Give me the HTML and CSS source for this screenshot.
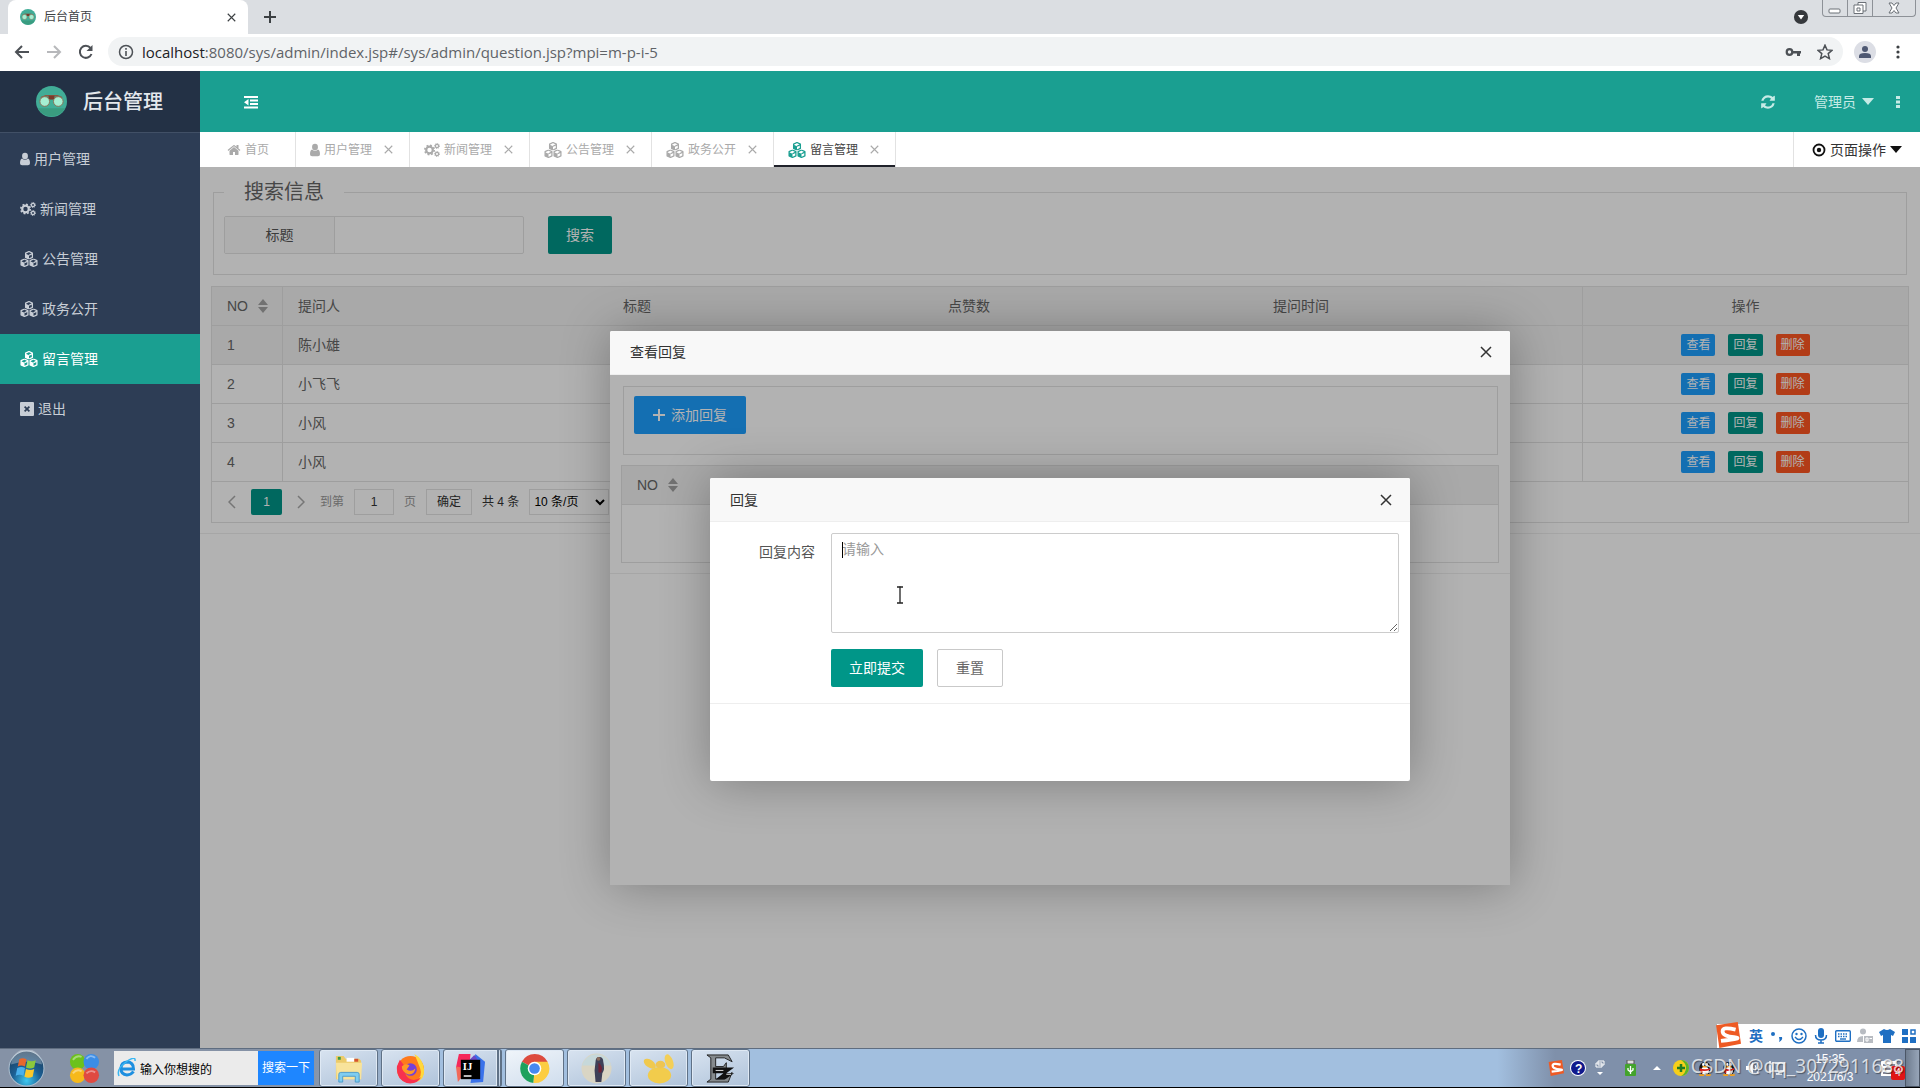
FILE: index.html
```html
<!DOCTYPE html>
<html lang="zh-CN">
<head>
<meta charset="utf-8">
<title>后台首页</title>
<link rel="stylesheet" href="styles.css">
</head>
<body>
<svg class="sprite" aria-hidden="true">
  <symbol id="logo" viewBox="0 0 32 32">
    <circle cx="16" cy="16" r="16" fill="#41ad97"/>
    <path d="M2 23a16 16 0 0 0 28 0z" fill="#3a9c80"/>
    <path d="M5 12l5-2h12l5 2" stroke="#8a5a44" stroke-width="1.500" fill="none"/>
    <rect x="13" y="10" width="6" height="4" fill="#7b3a2a"/>
    <circle cx="9" cy="16" r="5" fill="#a5efd2" stroke="#8a7358"/>
    <circle cx="23" cy="16" r="5" fill="#a5efd2" stroke="#8a7358"/>
  </symbol>
  <symbol id="user" viewBox="0 0 12 16">
    <ellipse cx="6" cy="4.500" rx="3.500" ry="4"/><path d="M2.500 7.500Q6 11 9.500 7.500Q12 8.500 12 13Q12 15.500 9.500 15.500H2.500Q0 15.500 0 13Q0 8.500 2.500 7.500z"/>
  </symbol>
  <symbol id="home" viewBox="0 0 1792 1792"><path d="M1472 992v480q0 26-19 45t-45 19h-384v-384h-256v384h-384q-26 0-45-19t-19-45v-480q0-1 .5-3t.5-3l575-474 575 474q1 2 1 6zm223-69l-62 74q-8 9-21 11h-3q-13 0-21-7l-692-577-692 577q-12 8-24 7-13-2-21-11l-62-74q-8-10-7-23.500t11-21.500l719-599q32-26 76-26t76 26l244 204v-195q0-14 9-23t23-9h192q14 0 23 9t9 23v408l219 182q10 8 11 21.500t-7 23.500z"/></symbol>
  <symbol id="cogs" viewBox="0 0 16 16">
    <g fill="none" stroke="currentColor">
      <circle cx="5.500" cy="8" r="3.300" stroke-width="2.200"/><circle cx="5.500" cy="8" r="4.700" stroke-width="1.600" stroke-dasharray="1.850 1.840"/>
      <circle cx="13" cy="4" r="1.600" stroke-width="1.200"/><circle cx="13" cy="4" r="2.500" stroke-width="1" stroke-dasharray="1 .96"/>
      <circle cx="13" cy="12" r="1.600" stroke-width="1.200"/><circle cx="13" cy="12" r="2.500" stroke-width="1" stroke-dasharray="1 .96"/>
    </g>
  </symbol>
  <symbol id="cube" viewBox="0 0 8 8">
    <path d="M4 .5L7.200 2v4L4 7.500L.8 6V2z" fill="none" stroke="currentColor" stroke-width="1.200" stroke-linejoin="round"/><path d="M.8 2.500L4 4v3.500L.8 6z"/><path d="M4 4l3.200-1.500" stroke="currentColor" stroke-width="1.200"/>
  </symbol>
  <symbol id="cubes" viewBox="0 0 18 16">
    <use href="#cube" x="4.500" y="0" width="9" height="8.500"/><use href="#cube" x="0" y="7.500" width="9" height="8.500"/><use href="#cube" x="9" y="7.500" width="9" height="8.500"/>
  </symbol>
  <symbol id="exit" viewBox="0 0 14 14"><path fill-rule="evenodd" d="M1 0h12q1 0 1 1v12q0 1-1 1H1q-1 0-1-1V1q0-1 1-1zm3 5.200L5.800 7 4 8.800 5.200 10 7 8.200 8.800 10 10 8.800 8.200 7 10 5.200 8.800 4 7 5.800 5.200 4z"/></symbol>
  <symbol id="outdent" viewBox="0 0 14 14"><path d="M0 1h14v2H0zM6 4.500h8v2H6zM6 8h8v2H6zM0 11.500h14v2H0zM0 7.200L4.500 4v6.500z"/></symbol>
  <symbol id="refresh" viewBox="0 0 1792 1792"><path d="M1639 1056q0 5-1 7-64 268-268 434.500t-478 166.500q-146 0-282.500-55t-243.500-157l-129 129q-19 19-45 19t-45-19-19-45v-448q0-26 19-45t45-19h448q26 0 45 19t19 45-19 45l-137 137q71 66 161 102t187 36q134 0 250-65t186-179q11-17 53-117 8-23 30-23h192q13 0 22.500 9.500t9.500 22.500zm25-800v448q0 26-19 45t-45 19h-448q-26 0-45-19t-19-45 19-45l138-138q-148-137-349-137-134 0-250 65t-186 179q-11 17-53 117-8 23-30 23h-199q-13 0-22.500-9.500t-9.500-22.500v-7q65-268 270-434.500t480-166.500q146 0 284 55.500t245 156.500l130-129q19-19 45-19t45 19 19 45z"/></symbol>
  <symbol id="target" viewBox="0 0 14 14"><circle cx="7" cy="7" r="5.500" fill="none" stroke="currentColor" stroke-width="1.800"/><circle cx="7" cy="7" r="2.200"/></symbol>
  <symbol id="caret" viewBox="0 0 12 7"><path d="M0 0h12L6 7z"/></symbol>
  <symbol id="cross" viewBox="0 0 12 12"><path d="M1 1l10 10M11 1L1 11" fill="none" stroke="currentColor" stroke-width="1.500"/></symbol>
  <symbol id="plus" viewBox="0 0 12 12"><path d="M6 0v12M0 6h12" fill="none" stroke="currentColor" stroke-width="2"/></symbol>
  <symbol id="left" viewBox="0 0 8 14"><path d="M7 1L1 7l6 6" fill="none" stroke="currentColor" stroke-width="1.500"/></symbol>
  <symbol id="right" viewBox="0 0 8 14"><path d="M1 1l6 6-6 6" fill="none" stroke="currentColor" stroke-width="1.500"/></symbol>
  <symbol id="sort" viewBox="0 0 10 14"><path d="M0 6h10L5 0zM0 8h10l-5 6z"/></symbol>
  <symbol id="dots" viewBox="0 0 4 14"><circle cx="2" cy="2" r="1.600"/><circle cx="2" cy="7" r="1.600"/><circle cx="2" cy="12" r="1.600"/></symbol>
  <symbol id="sdots" viewBox="0 0 4 14"><path d="M0 1h4v3H0zM0 5.500h4v3H0zM0 10h4v3H0z"/></symbol>
  <symbol id="sogou" viewBox="0 0 24 24"><path d="M1 3L21 0l3 20-20 4z" fill="#ee5a24"/><path d="M19 7Q7 4 7 8.500T17.500 14 5.500 17.500" fill="none" stroke="#fff" stroke-width="3.500"/></symbol>
  <symbol id="penguin" viewBox="0 0 18 18"><ellipse cx="9" cy="9.500" rx="6.500" ry="7.500" fill="#111"/><ellipse cx="9" cy="12" rx="4.300" ry="4.500" fill="#fff"/><ellipse cx="7" cy="5" rx="1.300" ry="1.800" fill="#fff"/><ellipse cx="11" cy="5" rx="1.300" ry="1.800" fill="#fff"/><ellipse cx="9" cy="7.500" rx="3" ry="1" fill="#f6a01a"/><path d="M3 9q6 3 12 0v2q-6 2-9 1v3H4z" fill="#d8231f"/><path d="M2 16h6v2H3zM10 16h6l-1 2h-5z" fill="#f6a01a"/></symbol>
</svg>

<header class="browser">
  <div class="tabstrip">
    <div class="browser-tab">
      <svg class="i16"><use href="#logo"/></svg>
      <span class="browser-title">后台首页</span>
      <button class="plain" aria-label="关闭标签页"><svg class="i9"><use href="#cross"/></svg></button>
    </div>
    <button class="plain new-tab" aria-label="新标签页"><svg class="i12"><use href="#plus"/></svg></button>
    <span class="spring"></span>
    <svg class="media" viewBox="0 0 14 14"><circle cx="7" cy="7" r="5.500" fill="#35383c"/><path d="M4.500 5.500h5L7 9z" fill="#fff"/></svg>
    <div class="window-buttons">
      <button aria-label="最小化"><svg viewBox="0 0 14 12"><rect x="1" y="7" width="11" height="4" rx="1"/></svg></button>
      <button aria-label="还原"><svg viewBox="0 0 14 12"><path d="M5 3V.5h8V9h-3"/><path d="M1 3h9v8.500H1z"/><path d="M4 6h3v3H4z"/></svg></button>
      <button class="wide" aria-label="关闭"><svg viewBox="0 0 14 12"><path d="M2 1h3l2 2.500L9 1h3L9 6l3 5H9L7 8.500 5 11H2l3-5z"/></svg></button>
    </div>
  </div>
  <div class="toolbar">
    <button class="plain" aria-label="后退"><svg class="i16 line" viewBox="0 0 16 16"><path d="M15 8H2M8 2L2 8l6 6"/></svg></button>
    <button class="plain faded" aria-label="前进"><svg class="i16 line" viewBox="0 0 16 16"><path d="M1 8h13M8 2l6 6-6 6"/></svg></button>
    <button class="plain" aria-label="刷新"><svg class="i16 line" viewBox="0 0 16 16"><path d="M13.500 10A6 6 0 1 1 12.500 4"/><path d="M14.500 1v6h-6z" fill="#4d5156" stroke="none"/></svg></button>
    <div class="omnibox">
      <svg class="i16" viewBox="0 0 16 16"><circle cx="8" cy="8" r="6.500" fill="none" stroke="#4d5156" stroke-width="1.500"/><path d="M7.200 7h1.600v5H7.200zM7.200 4h1.600v1.700H7.200z" fill="#4d5156"/></svg>
      <span class="url"><span class="host">localhost</span>:8080/sys/admin/index.jsp#/sys/admin/question.jsp?mpi=m-p-i-5</span>
      <svg class="i16" viewBox="0 0 16 16"><circle cx="4.500" cy="8" r="2.800" fill="none" stroke="#4d5156" stroke-width="2.200"/><path d="M7 7h9v2.500h-1V12h-3V9.500H7z" fill="#4d5156"/></svg>
      <svg class="i16" viewBox="0 0 16 16"><path d="M8 1.200l2 4.700 5 .4-3.800 3.300 1.200 5L8 12l-4.400 2.600 1.200-5L1 6.300l5-.4z" fill="none" stroke="#4d5156" stroke-width="1.500"/></svg>
    </div>
    <svg class="avatar" viewBox="0 0 22 22"><circle cx="11" cy="11" r="11" fill="#dcdee5"/><circle cx="11" cy="8" r="3" fill="#4e5872"/><path d="M5 17v-2q0-3 6-3t6 3v2z" fill="#4e5872"/></svg>
    <button class="plain" aria-label="菜单"><svg class="dots"><use href="#dots"/></svg></button>
  </div>
</header>

<div class="app">
  <aside class="sidebar">
    <div class="brand"><svg class="brand-logo"><use href="#logo"/></svg><span>后台管理</span></div>
    <nav class="menu">
      <a href="#"><svg class="i-user"><use href="#user"/></svg>用户管理</a>
      <a href="#"><svg class="i16"><use href="#cogs"/></svg>新闻管理</a>
      <a href="#"><svg class="i-cubes"><use href="#cubes"/></svg>公告管理</a>
      <a href="#"><svg class="i-cubes"><use href="#cubes"/></svg>政务公开</a>
      <a href="#" class="active"><svg class="i-cubes"><use href="#cubes"/></svg>留言管理</a>
      <a href="#"><svg class="i14"><use href="#exit"/></svg>退出</a>
    </nav>
  </aside>

  <div class="main">
    <div class="topbar">
      <button class="plain" aria-label="收起菜单"><svg class="i14"><use href="#outdent"/></svg></button>
      <span class="spring"></span>
      <button class="plain" aria-label="刷新页面"><svg class="i16"><use href="#refresh"/></svg></button>
      <a href="#" class="account">管理员<svg class="caret"><use href="#caret"/></svg></a>
      <button class="plain" aria-label="更多"><svg class="dots"><use href="#sdots"/></svg></button>
    </div>
    <div class="pagetabs">
      <a href="#" class="pagetab first"><svg class="i14"><use href="#home"/></svg>首页</a>
      <a href="#" class="pagetab"><svg class="i-user"><use href="#user"/></svg>用户管理<svg class="i9"><use href="#cross"/></svg></a>
      <a href="#" class="pagetab"><svg class="i16"><use href="#cogs"/></svg>新闻管理<svg class="i9"><use href="#cross"/></svg></a>
      <a href="#" class="pagetab"><svg class="i-cubes"><use href="#cubes"/></svg>公告管理<svg class="i9"><use href="#cross"/></svg></a>
      <a href="#" class="pagetab"><svg class="i-cubes"><use href="#cubes"/></svg>政务公开<svg class="i9"><use href="#cross"/></svg></a>
      <a href="#" class="pagetab current"><svg class="i-cubes"><use href="#cubes"/></svg>留言管理<svg class="i9"><use href="#cross"/></svg></a>
      <span class="spring"></span>
      <button class="page-actions"><svg class="i14"><use href="#target"/></svg>页面操作<svg class="caret"><use href="#caret"/></svg></button>
    </div>

    <div class="frame">
      <div class="page">
        <fieldset class="search">
          <legend>搜索信息</legend>
          <div class="field"><label for="title">标题</label><input id="title" type="text"></div>
          <button class="btn">搜索</button>
        </fieldset>
        <div class="grid">
          <table>
            <colgroup><col class="c-no"><col><col><col><col><col></colgroup>
            <thead><tr><th>NO<svg class="sort"><use href="#sort"/></svg></th><th>提问人</th><th>标题</th><th>点赞数</th><th>提问时间</th><th class="ops">操作</th></tr></thead>
            <tbody>
              <tr class="hover"><td>1</td><td>陈小雄</td><td></td><td></td><td></td><td class="ops"><div><button class="xs blue">查看</button><button class="xs">回复</button><button class="xs red">删除</button></div></td></tr>
              <tr><td>2</td><td>小飞飞</td><td></td><td></td><td></td><td class="ops"><div><button class="xs blue">查看</button><button class="xs">回复</button><button class="xs red">删除</button></div></td></tr>
              <tr><td>3</td><td>小风</td><td></td><td></td><td></td><td class="ops"><div><button class="xs blue">查看</button><button class="xs">回复</button><button class="xs red">删除</button></div></td></tr>
              <tr><td>4</td><td>小风</td><td></td><td></td><td></td><td class="ops"><div><button class="xs blue">查看</button><button class="xs">回复</button><button class="xs red">删除</button></div></td></tr>
            </tbody>
          </table>
          <div class="pager">
            <button class="plain arrow" aria-label="上一页"><svg><use href="#left"/></svg></button>
            <button class="num">1</button>
            <button class="plain arrow" aria-label="下一页"><svg><use href="#right"/></svg></button>
            <label for="pageno">到第</label><input id="pageno" type="text" value="1"><span>页</span>
            <button class="ok">确定</button>
            <span class="total">共 4 条</span>
            <select aria-label="每页条数"><option>10 条/页</option></select>
          </div>
        </div>
      </div>

      <div class="shade">
        <section class="dialog outer" aria-label="查看回复">
          <div class="dialog-head"><h2>查看回复</h2><button class="plain" aria-label="关闭"><svg class="i12"><use href="#cross"/></svg></button></div>
          <div class="frame">
            <div class="page">
              <div class="actions"><button class="btn blue"><svg class="i12"><use href="#plus"/></svg>添加回复</button></div>
              <div class="grid empty">
                <table><thead><tr><th>NO<svg class="sort"><use href="#sort"/></svg></th></tr></thead></table>
              </div>
            </div>
            <div class="shade">
              <section class="dialog inner" aria-label="回复">
                <div class="dialog-head"><h2>回复</h2><button class="plain" aria-label="关闭"><svg class="i12"><use href="#cross"/></svg></button></div>
                <form class="reply">
                  <label for="content">回复内容</label>
                  <div class="textbox"><textarea id="content" placeholder="请输入"></textarea><span class="text-caret"></span>
                    <svg class="ibeam" viewBox="0 0 8 18"><path d="M1 1h2.500l.5.5.5-.5H7M1 17h2.500l.5-.5.5.5H7M4 1v16" fill="none" stroke="#222" stroke-width="1.300"/></svg></div>
                  <div class="buttons"><button class="btn" type="button">立即提交</button><button class="btn ghost" type="reset">重置</button></div>
                </form>
              </section>
            </div>
          </div>
        </section>
      </div>
    </div>
  </div>
</div>

<footer class="taskbar">
  <button class="plain orb" aria-label="开始"><svg viewBox="0 0 36 36"><defs><radialGradient id="orb" cx=".5" cy=".85" r=".9"><stop offset="0" stop-color="#3fc8f0"/><stop offset=".45" stop-color="#1b5f94"/><stop offset="1" stop-color="#1c3550"/></radialGradient></defs><circle cx="18" cy="18" r="17" fill="url(#orb)" stroke="#a9bccd"/><path d="M3 14a15 15 0 0 1 30 0q-15-5-30 0z" fill="#fff" opacity=".3"/><path d="M11 9q3-2 7 0l-1.500 7q-4-2-7 0z" fill="#e8682c"/><path d="M19 10q4 2 8 0l-1.500 7q-4 2-8 0z" fill="#8cc83c"/><path d="M9 17.500q4-2 7.500 0L15 25q-4-2-7.500 0z" fill="#4ab0ec"/><path d="M17.500 18.500q4 2 8 0L24 26q-4 2-8 0z" fill="#fcc82a"/></svg></button>
  <button class="plain petals" aria-label="应用"><svg viewBox="0 0 32 32"><circle cx="9" cy="9" r="8" fill="#6cc11c"/><circle cx="23" cy="9" r="8" fill="#3b8de6"/><circle cx="9" cy="23" r="8" fill="#f6b91b"/><circle cx="23" cy="23" r="8" fill="#e04a41"/><path d="M4 7q4-5 9-3M18 6q4-5 9-1M4 21q4-5 9-2M18 21q4-4 9-1" stroke="#fff" stroke-width="2" opacity=".4" fill="none"/></svg></button>
  <div class="desk-search">
    <svg viewBox="0 0 20 20"><path d="M16.500 13.500Q14 17 10 17 4 16.500 4 10.500T10 4q6.500 0 6.500 7H5" fill="none" stroke="#1e8fe0" stroke-width="3"/><path d="M2 18Q-1 11 9 4t9-1" fill="none" stroke="#38b6f2" stroke-width="1.500"/></svg>
    <input type="text" value="输入你想搜的" aria-label="桌面搜索"><button>搜索一下</button>
  </div>
  <div class="tasks">
    <button aria-label="资源管理器"><svg viewBox="0 0 32 32"><path d="M3 3h8l2 3h14l2 2v19H3z" fill="#eccb6a"/><path d="M5 4h3v3H5z" fill="#3c9a42"/><path d="M14 5h8v4h-8z" fill="#fff"/><path d="M22 6h4v3h-4z" fill="#d5542e"/><path d="M3 10h27l-1 17H4z" fill="#f8e39b"/><path d="M6 30v-8q0-2 2-2h17q2 0 2 2v8h-4v-6H10v6z" fill="#7fcdf0" stroke="#4b9ccb"/></svg></button>
    <button aria-label="Firefox"><svg viewBox="0 0 32 32"><circle cx="16" cy="17" r="14" fill="#ff7a1c"/><path d="M20 1q9 5 10 16t-9 13q8-6 5-14T20 1z" fill="#ffd83c"/><path d="M2 14q-1 13 10 17 10 2 15-6-7 5-13 1-5-4-3-11L5 7z" fill="#f8314e"/><circle cx="16" cy="17" r="6.500" fill="#7540d8"/><path d="M7 14q4-4 8-1l-3 4q5 3 9-1-1 7-8 6-6-3-6-8z" fill="#ff9a24"/></svg></button>
    <button class="stack" aria-label="IntelliJ IDEA"><svg viewBox="0 0 32 32"><path d="M4 1h12l-2 20L1 15z" fill="#f5295b"/><path d="M21 1l10 8-2 21-13 1z" fill="#3a72ea"/><path d="M1 14l13 2-11 14z" fill="#f26a5a"/><path d="M14 8L20 2l6 9z" fill="#6b49c8"/><path d="M6 7h20v20H6z" fill="#000"/><path d="M9 23h8v1.500H9z" fill="#fff"/><text x="8" y="18" class="ij">IJ</text></svg></button>
    <button class="on" aria-label="Chrome"><svg viewBox="0 0 32 32"><path d="M16 16L3 9A15 15 0 0 1 29.500 9z" fill="#dd4b3e"/><path d="M16 16L3 9a15 15 0 0 0 12 22z" fill="#1ea15d"/><path d="M16 16L15 31A15 15 0 0 0 29.500 9H16z" fill="#fccd42"/><circle cx="16" cy="16" r="7" fill="#fff"/><circle cx="16" cy="16" r="5.500" fill="#4688f1"/></svg></button>
    <button aria-label="头像"><svg viewBox="0 0 32 32"><circle cx="16" cy="16" r="15.500" fill="#d9d5c4"/><path d="M1 13a15.500 15.500 0 0 1 30 0z" fill="#c6d8da"/><path d="M15 9q0-5 4-5t4 5q2 8-1 12l-1 9h-6l-1-12z" fill="#3e4057"/><path d="M18 10q5 3 3 10h-3z" fill="#6e2135"/><circle cx="18" cy="6" r="2" fill="#8a6a5c"/></svg></button>
    <button aria-label="Navicat"><svg viewBox="0 0 32 32"><ellipse cx="7" cy="11" rx="7" ry="4" transform="rotate(35 7 11)" fill="#f0c94e"/><ellipse cx="17" cy="23" rx="12" ry="8.500" fill="#f2cc4c"/><ellipse cx="18" cy="12" rx="5" ry="4" fill="#eec552"/><ellipse cx="27" cy="9" rx="4" ry="8" transform="rotate(-20 27 9)" fill="#f3cf58"/></svg></button>
    <button aria-label="录像工具"><svg viewBox="0 0 32 32"><path d="M2 2h22l4 7-8-4h-9v9h8l3-4v9l-3-3h-8v11h9l8-7-4 10H2l4-3V5z" fill="#858a8d" stroke="#222"/><path d="M8 15h22l-8 6h8l-9 6H11l8-6H8z" fill="#111"/><path d="M11 18h8M22 22h5" stroke="#ddd"/></svg></button>
  </div>
  <span class="spring"></span>
  <div class="tray">
    <svg class="i16"><use href="#sogou"/></svg>
    <svg class="i16 help" viewBox="0 0 16 16"><circle cx="8" cy="8" r="8" fill="#fff"/><circle cx="8" cy="8" r="7" fill="#10198c"/><text x="5" y="12.500" class="q">?</text></svg>
    <svg class="i16" viewBox="0 0 16 16"><path d="M6 1h6v4H6zM4 3h6v4H4z" fill="#8090a8" stroke="#fff"/><path d="M5 12h6l-3 3z" fill="#fff"/></svg>
    <svg class="i16 usb" viewBox="0 0 16 16"><path d="M5 0h7v4H5z" fill="#ddd" stroke="#555"/><rect x="3" y="4" width="11" height="12" rx="1" fill="#43a32c"/><path d="M8.500 14V6M6 8v2l2.500 2L11 10V8" fill="none" stroke="#fff" stroke-width="1.300"/></svg>
    <svg class="i16" viewBox="0 0 16 16"><path d="M4 10h8L8 6z" fill="#fff"/></svg>
    <svg class="i16" viewBox="0 0 16 16"><circle cx="8" cy="8" r="8" fill="#f6cf1a"/><path d="M8 0a8 8 0 0 1 0 16q5-3 5-8T8 0z" fill="#58b42e"/><path d="M8 4v8M4 8h8" stroke="#1f7c22" stroke-width="2.500"/></svg>
    <svg class="i16"><use href="#penguin"/></svg>
    <svg class="i16"><use href="#penguin"/></svg>
    <svg class="i16" viewBox="0 0 16 16"><path d="M1 6h3l4-4v12L4 10H1z" fill="#fff"/><path d="M10 5q2 3 0 6M12 3q4 5 0 10" stroke="#fff" fill="none"/></svg>
    <svg class="i16" viewBox="0 0 16 16"><path d="M4 3h11v8H4zM7 14h6M10 11v3M1 1v13" fill="none" stroke="#fff" stroke-width="1.500"/></svg>
    <div class="clock"><span>15:35</span><span>2021/6/3</span></div>
    <div class="notes"><svg viewBox="0 0 20 20"><path d="M2 3h16v15H2z" fill="#fff"/><path d="M4 7h12M4 11h12M4 15h8" stroke="#667" stroke-width="1.500"/></svg><span class="badge">4</span></div>
  </div>
  <button class="show-desktop" aria-label="显示桌面"></button>

  <div class="ime">
    <svg class="ime-logo"><use href="#sogou"/></svg>
    <b>英</b>
    <svg class="i16" viewBox="0 0 16 16"><circle cx="4" cy="6" r="2"/><path d="M10 9h3q1 3-3 5 1-2 0-5z"/></svg>
    <svg class="i16" viewBox="0 0 16 16"><circle cx="8" cy="8" r="7" fill="none" stroke="currentColor" stroke-width="1.500"/><circle cx="5.500" cy="6" r="1.200"/><circle cx="10.500" cy="6" r="1.200"/><path d="M4 9q4 5 8 0" fill="none" stroke="currentColor" stroke-width="1.400"/></svg>
    <svg class="i16" viewBox="0 0 16 16"><rect x="5" y="0" width="6" height="10" rx="3"/><path d="M2.500 7q0 5 5.500 5t5.500-5M8 12v3M5 15h6" fill="none" stroke="currentColor" stroke-width="1.500"/></svg>
    <svg class="i16" viewBox="0 0 16 16"><rect x=".7" y="2.700" width="14.600" height="10.600" rx="1" fill="none" stroke="currentColor" stroke-width="1.400"/><path d="M3 6h10M3 8.500h10" stroke="currentColor" stroke-width="1.400" stroke-dasharray="1.500 1"/><path d="M5 11h6" stroke="currentColor" stroke-width="1.400"/></svg>
    <svg class="i16 grey" viewBox="0 0 16 16"><circle cx="6" cy="3.500" r="3"/><path d="M0 14q0-6 6-6v6zM7 8h9v7H7z"/><path d="M9 10h2v3H9zM12.500 10.500H15" fill="none" stroke="#fff"/></svg>
    <svg class="i16" viewBox="0 0 16 16"><path d="M5 1q3 2 6 0l5 3-2 4-2-1v8H4V7L2 8 0 4z"/></svg>
    <svg class="i16" viewBox="0 0 16 16"><path d="M1 1h6v6H1zM1 9h6v6H1zM9 9h6v6H9z"/><path d="M10 2h4v4h-4z" fill="none" stroke="currentColor" stroke-width="1.500"/></svg>
  </div>
  <span class="watermark">CSDN @qq_3072911688</span>
</footer>
</body>
</html>
```
FILE: styles.css
```css
* { box-sizing: border-box; }
html, body { height: 100%; }
body {
  margin: 0;
  display: flex;
  flex-direction: column;
  overflow: hidden;
  font: 14px/20px "Liberation Sans", "Noto Sans CJK SC", sans-serif;
  color: #666;
  background: #fff;
}
svg { display: block; flex: none; fill: currentColor; }
a { color: inherit; text-decoration: none; }
button, input, textarea, select { font: inherit; color: inherit; margin: 0; }
button { border: 0; padding: 0; white-space: nowrap; }
.plain { background: none; display: flex; align-items: center; justify-content: center; }
.sprite { position: absolute; width: 0; height: 0; }
.spring { flex: 1; }
.i9 { width: 9px; height: 9px; }
.i12 { width: 12px; height: 12px; }
.i14 { width: 14px; height: 14px; }
.i16 { width: 16px; height: 16px; }
.i-user { width: 10px; height: 14px; }
.i-cubes { width: 18px; height: 16px; }
.caret { width: 12px; height: 7px; }
.dots { width: 4px; height: 14px; }

/* browser chrome */
.browser { flex: none; color: #3c4043; }
.tabstrip { display: flex; align-items: center; height: 34px; padding: 0 4px 0 8px; background: #dbdee2; }
.browser-tab { display: flex; align-items: center; gap: 8px; width: 240px; height: 34px; padding: 0 12px; border-radius: 8px 8px 0 0; background: #fff; font-size: 12px; }
.browser-title { flex: 1; }
.new-tab { width: 44px; height: 34px; }
.media { width: 18px; height: 18px; }
.window-buttons { display: flex; align-self: flex-start; height: 17px; margin-left: 12px; border: 1px solid #8d9197; border-top: 0; border-radius: 0 0 4px 4px; }
.window-buttons button { width: 25px; display: grid; place-items: center; background: none; border-right: 1px solid #8d9197; }
.window-buttons .wide { width: 42px; border-right: 0; }
.window-buttons svg { width: 14px; height: 12px; fill: #fff; stroke: #6b7077; }
.toolbar { display: flex; align-items: center; gap: 16px; height: 37px; padding: 0 20px 2px 14px; background: #fff; }
.line { fill: none; stroke: #4d5156; stroke-width: 2; }
.faded { opacity: .4; }
.omnibox { flex: 1; display: flex; align-items: center; gap: 16px; height: 29px; margin-left: -2px; padding: 0 10px; border-radius: 15px; background: #f1f3f4; font: 15px/20px "Open Sans", "Noto Sans", sans-serif; color: #5f6368; }
.url { flex: 1; margin-left: -8px; }
.host { color: #202124; }
.avatar { width: 22px; height: 22px; margin: 0 4px 0 -5px; }

/* admin shell */
.app { flex: 1; display: flex; min-height: 0; }
.sidebar { flex: none; width: 200px; background: #2d3d55; color: #c8ced6; }
.brand { display: flex; align-items: center; gap: 16px; height: 62px; padding-left: 36px; background: #233145; border-bottom: 1px solid #415066; font-size: 20px; font-weight: 500; color: #e4e8ed; }
.brand-logo { width: 31px; height: 31px; }
.menu { padding-top: 1px; }
.menu a { display: flex; align-items: center; gap: 4px; height: 50px; padding-left: 20px; }
.menu .active { background: #1a9f91; color: #fff; }
.main { flex: 1; display: flex; flex-direction: column; min-width: 0; }
.topbar { flex: none; display: flex; align-items: center; height: 61px; padding: 0 20px 0 44px; background: #1a9f91; color: #c6ebe6; }
.topbar > :first-child { color: #fff; }
.account { display: flex; align-items: center; gap: 6px; margin: 0 22px 0 38px; }
.pagetabs { flex: none; display: flex; height: 35px; background: #fff; font-size: 12px; color: #aaa; }
.pagetab { display: flex; align-items: center; gap: 4px; padding: 0 16px 0 14px; border-right: 1px solid #e2e2e2; }
.pagetab .i9 { margin-left: 8px; }
.pagetab.first { padding: 0 26px 0 27px; }
.pagetab.current { color: #444; box-shadow: inset 0 -2px #20222a; }
.pagetab.current svg:first-child { color: #1a9f91; }
.pagetab.current .i9 { color: #aaa; }
.page-actions { display: flex; align-items: center; gap: 4px; padding: 0 18px; background: none; border-left: 1px solid #e2e2e2; font-size: 14px; color: #333; }
.page-actions svg { color: #111; }

/* page and layers */
.frame { position: relative; flex: 1; min-height: 0; background: #fff; }
.shade { position: absolute; inset: 0; display: grid; place-items: center; background: rgba(0, 0, 0, .3); }
.page { padding: 13px 11px 10px; border-bottom: 1px solid #eee; }
.search { display: flex; align-items: center; gap: 24px; margin: 0 2px 11px; padding: 12px 10px 20px; border: 1px solid #e2e2e2; }
.search legend { margin-left: 0; padding: 0 20px; font-size: 20px; line-height: 24px; }
.field { display: flex; height: 38px; border: 1px solid #e2e2e2; border-radius: 2px; }
.field label { width: 110px; line-height: 36px; text-align: center; background: #fafafa; border-right: 1px solid #e2e2e2; color: #555; }
.field input { width: 188px; border: 0; background: none; }
.btn { height: 38px; padding: 0 18px; border-radius: 2px; background: #009688; color: #fff; }
.btn.blue { display: flex; align-items: center; gap: 6px; padding: 0 19px; background: #1e9fff; }
.btn.ghost { border: 1px solid #c9c9c9; background: #fff; color: #666; }
.grid { border: 1px solid #e2e2e2; }
.grid table { width: 100%; table-layout: fixed; border-collapse: separate; border-spacing: 0; }
.c-no { width: 71px; }
.grid th, .grid td { height: 39px; padding: 0 0 0 15px; border-bottom: 1px solid #e2e2e2; text-align: left; font-weight: 400; white-space: nowrap; }
.grid th { background: #f2f2f2; }
.grid tr > :first-child, .grid tr > :nth-last-child(2) { border-right: 1px solid #e2e2e2; }
.grid .hover { background: #f2f2f2; }
.grid .ops { padding: 0; text-align: center; }
.ops div { display: flex; justify-content: center; gap: 13px; }
.sort { display: inline-block; width: 10px; height: 14px; margin-left: 10px; vertical-align: -2px; color: #a3a3a3; }
.xs { height: 22px; padding: 0 5px; border-radius: 2px; background: #009688; color: #fff; font-size: 12px; line-height: 22px; }
.xs.blue { background: #1e9fff; }
.xs.red { background: #ff5722; }
.pager { display: flex; align-items: center; height: 40px; padding-left: 16px; gap: 10px; font-size: 12px; color: #333; }
.pager label, .pager label + input + span { color: #999; }
.arrow { width: 8px; color: #aaa; }
.arrow svg { width: 8px; height: 14px; }
.num { width: 31px; height: 26px; margin: 0 5px; border-radius: 2px; background: #009688; color: #fff; }
.pager label { margin-left: 5px; }
.pager input { width: 40px; height: 26px; border: 1px solid #e2e2e2; text-align: center; background: none; }
.ok { width: 46px; height: 26px; border: 1px solid #e2e2e2; background: none; }
.pager select { width: 80px; height: 26px; border: 1px solid #e2e2e2; background: none; color: #000; }

/* dialogs */
.dialog { display: flex; flex-direction: column; border-radius: 2px; background: #fff; box-shadow: 1px 1px 50px rgba(0, 0, 0, .3); }
.outer { width: 900px; height: 554px; }
.inner { width: 700px; height: 303px; }
.dialog-head { flex: none; display: flex; align-items: center; justify-content: space-between; height: 44px; padding: 0 18px 0 20px; background: #f8f8f8; border-bottom: 1px solid #eee; border-radius: 2px 2px 0 0; color: #333; }
.dialog-head h2 { margin: 0; font-size: 14px; font-weight: 400; }
.dialog .page { padding: 11px 11px 10px; }
.actions { margin: 0 1px 10px 2px; padding: 9px 10px 20px; border: 1px solid #e2e2e2; }
.grid.empty { height: 98px; }
.grid.empty tr > :first-child { border-right: 0; }
.reply { display: grid; grid-template-columns: 105px 1fr; column-gap: 16px; row-gap: 16px; padding: 11px 11px 16px 0; border-bottom: 1px solid #eee; color: #555; }
.reply label { padding-top: 9px; text-align: right; }
.textbox { position: relative; }
.textbox textarea { display: block; width: 100%; height: 100px; padding: 5px 10px; border: 1px solid #ccc; border-radius: 2px; background: #fff; }
.textbox textarea::placeholder { color: #999; }
.text-caret { position: absolute; left: 11px; top: 9px; width: 1px; height: 16px; background: #000; }
.ibeam { position: absolute; left: 65px; top: 53px; width: 8px; height: 18px; }
.buttons { grid-column: 2; display: flex; gap: 14px; }

/* desktop taskbar */
.taskbar { position: relative; flex: none; display: flex; align-items: center; height: 40px; border-top: 1px solid #5f6d80; border-bottom: 1px solid #000; background: linear-gradient(90deg, #8592a6 0, #8592a6 16%, #a2bfdf 22%, #a2bfdf 78%, #7f90aa 81%, #7f90aa 100%); color: #fff; }
.orb { margin-left: 8px; }
.orb svg { width: 37px; height: 37px; }
.petals { margin: 0 14px 0 24px; }
.petals svg { width: 31px; height: 31px; }
.desk-search { display: flex; align-items: center; height: 34px; background: #ebebeb; font-size: 12px; color: #000; }
.desk-search svg { width: 20px; height: 20px; margin: 0 2px 0 3px; }
.desk-search input { width: 119px; height: 34px; padding: 0 1px; border: 0; background: none; }
.desk-search button { width: 56px; height: 34px; background: #1e86ff; color: #fff; }
.tasks { display: flex; gap: 3px; margin-left: 5px; }
.tasks button { width: 59px; height: 38px; display: grid; place-items: center; border: 1px solid #5f7186; border-radius: 3px; background: linear-gradient(160deg, #d8e3f0, #afc3da); box-shadow: inset 0 0 0 1px #dfe9f4; }
.tasks .on { background: linear-gradient(160deg, #f0f5fa, #cfdded); }
.tasks .stack { border-right: 5px double #5f7186; }
.tasks svg { width: 31px; height: 31px; }
.ij { font: bold 11px "Liberation Serif", serif; fill: #fff; }
.q { font: bold 12px "Liberation Sans", sans-serif; fill: #fff; }
.tray { display: flex; align-items: center; gap: 8px; }
.help { margin: 0 -2px; }
.usb { margin: 0 3px 0 6px; }
.clock { display: flex; flex-direction: column; align-items: center; width: 64px; margin: 0 9px 0 5px; font-size: 12px; line-height: 18px; }
.notes { position: relative; width: 24px; }
.notes svg { width: 20px; height: 20px; }
.badge { position: absolute; left: 12px; top: 8px; width: 14px; height: 14px; background: #e01515; border-radius: 2px; font-size: 10px; line-height: 14px; text-align: center; }
.show-desktop { width: 15px; height: 38px; margin-left: 2px; border: 1px solid #4b5666; background: linear-gradient(90deg, #6f7d90, #97a5b8); }
.ime { position: absolute; right: 0; bottom: 39px; display: flex; align-items: center; gap: 6px; height: 24px; padding-right: 3px; background: #fff; color: #1f6fc2; }
.ime-logo { width: 26px; height: 26px; margin: -3px 2px 0 -2px; }
.ime b { font-size: 14px; }
.grey { color: #b8bcc2; }
.watermark { position: absolute; right: 16px; bottom: 8px; font: 19px/26px "Noto Sans", sans-serif; color: rgba(255, 255, 255, .75); text-shadow: 1px 1px 1px rgba(0, 0, 0, .4); }
```
